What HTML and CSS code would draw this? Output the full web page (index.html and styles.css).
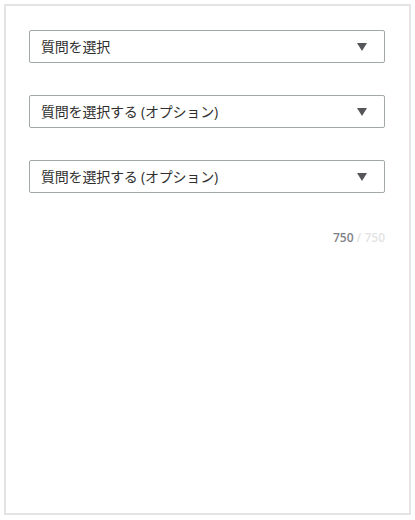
FILE: index.html
```html
<!DOCTYPE html>
<html lang="ja">
<head>
  <meta charset="UTF-8">
  <meta name="viewport" content="width=device-width, initial-scale=1.0">
  <title>質問を選択</title>
  <link rel="stylesheet" href="styles.css">
</head>
<body>
  <div class="panel">
    <div class="question-list">
      <div class="picker">
        <span class="picker-label">質問を選択</span>
        <svg class="picker-arrow" width="10" height="8" viewBox="0 0 10 8"><polygon points="0,0 10,0 5,8" /></svg>
      </div>
      <div class="picker">
        <span class="picker-label">質問を選択する (オプション)</span>
        <svg class="picker-arrow" width="10" height="8" viewBox="0 0 10 8"><polygon points="0,0 10,0 5,8" /></svg>
      </div>
      <div class="picker">
        <span class="picker-label">質問を選択する (オプション)</span>
        <svg class="picker-arrow" width="10" height="8" viewBox="0 0 10 8"><polygon points="0,0 10,0 5,8" /></svg>
      </div>
    </div>
    <div class="counter"><span class="used">750</span> / 750</div>
  </div>
</body>
</html>
```

FILE: styles.css
```css
/* General styles */
* {
  margin: 0;
  padding: 0;
  box-sizing: border-box;
  font-family: "Open Sans", "Noto Sans CJK JP", sans-serif;
}

body {
  background-color: #fff;
  padding: 4px;
}

.panel {
  width: 407px;
  height: 511px;
  border: 2px solid #e4e4e4;
  padding: 24px 24px 0 23px;
}

/* Question pickers */
.question-list {
  display: flex;
  flex-direction: column;
  gap: 32px;
}

.picker {
  display: flex;
  align-items: center;
  justify-content: space-between;
  height: 33px;
  padding: 0 17px 0 11px;
  border: 1px solid #a3a8aa;
  border-radius: 2px;
}

.picker-label {
  font-size: 14px;
  color: #2f2f2f;
  line-height: 1;
  letter-spacing: -0.2px;
}

.picker-arrow {
  fill: #54565a;
}

/* Character counter */
.counter {
  margin-top: 36px;
  text-align: right;
  font-size: 12px;
  font-weight: 600;
  color: #e3e3e3;
}

.counter .used {
  color: #7e8286;
}
```
